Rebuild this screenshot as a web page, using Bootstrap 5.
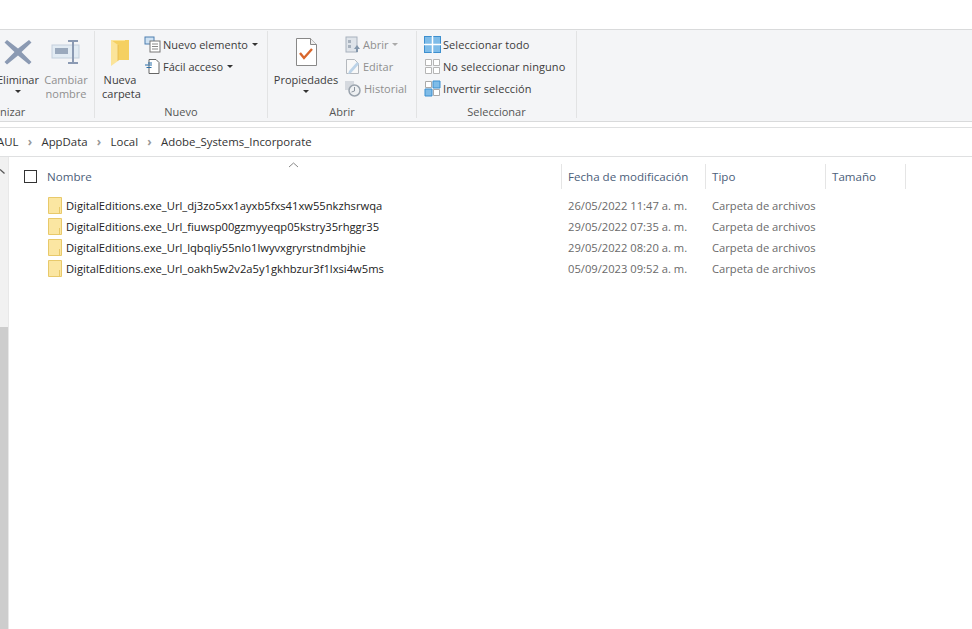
<!DOCTYPE html>
<html lang="es">
<head>
<meta charset="utf-8">
<link href="https://cdn.jsdelivr.net/npm/bootstrap@5.3.0/dist/css/bootstrap.min.css" rel="stylesheet">
<style>
html,body{margin:0;height:100%;overflow:hidden;background:#fff}
body{width:972px;height:629px;font-family:"Open Sans","Noto Sans",sans-serif;font-size:11px;line-height:15px;color:#3c3c3c}
.topgap{height:29px;background:#fff}
.ribbon{height:93px;background:#f4f5f7;border-top:1.500px solid #d9dadb;border-bottom:1.500px solid #d9dadb;padding-top:1px}
.rgroup{height:87px;border-right:1px solid #e2e3e4;flex:none;position:relative;padding-top:6px}
.g1{width:95px}.g2{width:173px}.g3{width:149px}.g4{width:160px}
.glabel{position:absolute;left:0;right:0;bottom:-1px;text-align:center;color:#555;height:15px}
.big{text-align:center;flex:none;line-height:14px}
.big svg{display:block;margin:0 auto 6px}
.dim{color:#8f8f8f}
.caret{display:inline-block;width:0;height:0;border-left:3px solid transparent;border-right:3px solid transparent;border-top:3px solid #333;vertical-align:2px;margin-left:2px}
.caret.off{border-top-color:#aaa}
.caret-solo{display:block;margin:3px auto 0;width:0;height:0;border-left:3px solid transparent;border-right:3px solid transparent;border-top:3px solid #333}
.smalls{display:flex;flex-direction:column;gap:0;margin-top:-4px}
.sm-row{display:flex;align-items:center;height:22px;gap:2px;white-space:nowrap}
.sm-row svg{flex:none}
.wide{letter-spacing:.08px}
.addr{height:30px;margin-top:5px;background:#fff;border-top:1.500px solid #dfe0e1;border-bottom:1.500px solid #dfe0e1;color:#333;font-size:11.400px;white-space:nowrap;padding-bottom:2px}
.addr .seg{margin-left:-3px}
.chev{color:#999;font-size:12px;font-weight:700;width:23px;text-align:center;flex:none}
.mainarea{height:473px}
.sbar{width:9px;flex:none;background:#f1f1f1;border-right:1px solid #e8e8e8;position:relative}
.thumb{position:absolute;left:0;right:0;top:170px;bottom:0;background:#cdcdcd}
.sarrow{position:absolute;left:0;top:12px}
.listing{flex:1;min-width:0;position:relative}
.hdr{height:38px;display:flex;align-items:flex-start;color:#4c607a;font-size:11.600px;padding-top:7px;line-height:25px}
.hcell{height:25px;border-right:1px solid #e5e5e5;padding-left:6px;flex:none}
.hname{width:553px;padding-left:0;display:flex;align-items:center}
.cbox{width:13px;height:13px;border:1px solid #333;margin:0 10px 0 15px;flex:none;background:#fff}
.hdate{width:144px}.htype{width:120px}.hsize{width:80px}
.sortmark{position:absolute;left:279px;top:5px}
.frow{height:21px;display:flex;align-items:center;font-size:11.200px;line-height:21px;white-space:nowrap}
.fname{width:553px;flex:none;display:flex;align-items:center;padding-left:39px;color:#222}
.fname svg{flex:none;margin-right:4px}
.fdate{width:144px;flex:none;padding-left:6px;color:#6a6a6a}
.ftype{flex:none;padding-left:6px;color:#6a6a6a}
</style>
</head>
<body>
<div class="topgap"></div>
<div class="ribbon d-flex">
  <div class="rgroup g1 d-flex">
    <div class="big" style="margin-left:-9px;width:54px">
      <svg width="30" height="30" viewBox="0 0 30 30"><path d="M4 3 L15 11.500 L26 3 L28.500 5.500 L18.500 15 L28.500 25 L26 27.500 L15 18.500 L4 27.500 L1.500 25 L11.500 15 L1.500 5.500Z" fill="#8b9ab3"/></svg>
      <div>Eliminar</div><span class="caret-solo"></span>
    </div>
    <div class="big dim" style="width:46px;margin-left:-2px">
      <svg width="30" height="30" viewBox="0 0 30 30"><rect x="1" y="8" width="27" height="13" fill="#e2ebf3" stroke="#c3d0dd"/><rect x="4" y="11" width="13" height="6" fill="#9aa9bd"/><path d="M17 4h10M17 26h10M22 4v22" stroke="#8b9ab3" stroke-width="2" fill="none"/></svg>
      <div>Cambiar<br>nombre</div>
    </div>
    <div class="glabel" style="text-align:left">nizar</div>
  </div>
  <div class="rgroup g2 d-flex">
    <div class="big" style="margin-left:7px;width:36px">
      <svg width="20" height="30" viewBox="0 0 20 30"><path d="M1 3h18v20H8z" fill="#f5d061"/><path d="M1 3L8 8V24L1 29z" fill="#fbe49a"/><path d="M1 3h14v1H1z" fill="#fbe49a"/><path d="M8 8V24" stroke="#e6b84a" stroke-width=".8"/></svg>
      <div>Nueva<br>carpeta</div>
    </div>
    <div class="smalls" style="margin-left:6px">
      <div class="sm-row"><svg width="17" height="17" viewBox="0 0 17 17"><rect x="1" y="1" width="9" height="7" fill="#cfe2f3" stroke="#4d7fb0"/><rect x="6" y="5" width="10" height="11" fill="#fff" stroke="#777"/><path d="M8 8h6M8 10.500h6M8 13h6" stroke="#888"/></svg><span>Nuevo elemento</span><span class="caret"></span></div>
      <div class="sm-row"><svg width="17" height="17" viewBox="0 0 17 17"><path d="M5 1.500h7l3 3v11H5z" fill="#fff" stroke="#666"/><path d="M1 7h7M2.500 9.500h5M4 5h4" stroke="#2a6ea8" stroke-width="1.200"/></svg><span>Fácil acceso</span><span class="caret"></span></div>
    </div>
    <div class="glabel">Nuevo</div>
  </div>
  <div class="rgroup g3 d-flex">
    <div class="big" style="margin-left:5px;width:66px">
      <svg width="24" height="30" viewBox="0 0 24 30"><path d="M2.500 1.500h14l6 6v21h-20z" fill="#fff" stroke="#888"/><path d="M16.500 1.500v6h6" fill="#eee" stroke="#888"/><path d="M6 16l4 5 8-9" fill="none" stroke="#d9662b" stroke-width="2.400"/></svg>
      <div>Propiedades</div><span class="caret-solo"></span>
    </div>
    <div class="smalls dim" style="margin-left:5px">
      <div class="sm-row"><svg width="17" height="17" viewBox="0 0 17 17"><rect x="2" y="1" width="11" height="15" fill="#dfe4ea" stroke="#a8b2be"/><path d="M4 4h3v3H4zM4 9h3v3H4z" fill="#a8b2be"/><path d="M13 9l3 4h-2v3h-2v-3h-2z" fill="#8396ab"/></svg><span>Abrir</span><span class="caret off"></span></div>
      <div class="sm-row"><svg width="17" height="17" viewBox="0 0 17 17"><path d="M2.500 1.500h8l4 4v10h-12z" fill="#f8f8f8" stroke="#b5b9be"/><path d="M5 13l8-9 2 2-8 9-3 1z" fill="#bcd3e8"/></svg><span>Editar</span></div>
      <div class="sm-row"><svg width="18" height="17" viewBox="0 0 18 17"><rect x="1" y="1" width="9" height="9" fill="#d5d9df"/><circle cx="10.500" cy="10.500" r="5.500" fill="#eef0f2" stroke="#9aa3ad" stroke-width="1.500"/><path d="M10.500 7v4l-3 1" stroke="#8a939e" fill="none"/></svg><span>Historial</span></div>
    </div>
    <div class="glabel">Abrir</div>
  </div>
  <div class="rgroup g4">
    <div class="smalls wide" style="margin-left:7px">
      <div class="sm-row"><svg width="17" height="17" viewBox="0 0 17 17"><rect x="0.500" y="0.500" width="16" height="16" fill="#7fbce8" stroke="#3d8fcf"/><path d="M8.500 0v17M0 8.500h17" stroke="#fff" stroke-width="1.500"/></svg><span>Seleccionar todo</span></div>
      <div class="sm-row"><svg width="17" height="17" viewBox="0 0 17 17"><path d="M1.500 1.500h6v6h-6zM9.500 1.500h6v6h-6zM1.500 9.500h6v6h-6zM9.500 9.500h6v6h-6z" fill="#fff" stroke="#b5b5b5"/></svg><span>No seleccionar ninguno</span></div>
      <div class="sm-row"><svg width="17" height="17" viewBox="0 0 17 17"><path d="M1.500 1.500h6v6h-6zM9.500 9.500h6v6h-6z" fill="#fff" stroke="#aaa"/><path d="M9 1h7v7H9zM1 9h7v7H1z" fill="#7fbce8" stroke="#3d8fcf"/></svg><span>Invertir selección</span></div>
    </div>
    <div class="glabel">Seleccionar</div>
  </div>
</div>
<div class="addr d-flex align-items-center">
  <span class="seg">AUL</span><span class="chev">&#8250;</span><span>AppData</span><span class="chev">&#8250;</span><span>Local</span><span class="chev">&#8250;</span><span>Adobe_Systems_Incorporate</span>
</div>
<div class="mainarea d-flex">
  <div class="sbar"><div class="thumb"></div>
    <svg class="sarrow" width="5" height="5" viewBox="0 0 5 5"><path d="M0 0.500 L4.500 4.500" stroke="#555" stroke-width="1.300" fill="none"/></svg>
  </div>
  <div class="listing">
    <svg class="sortmark" width="11" height="6" viewBox="0 0 11 6"><path d="M1 5 L5.500 1 L10 5" stroke="#888" fill="none"/></svg>
    <div class="hdr">
      <div class="hcell hname"><span class="cbox"></span>Nombre</div>
      <div class="hcell hdate">Fecha de modificación</div>
      <div class="hcell htype">Tipo</div>
      <div class="hcell hsize">Tamaño</div>
    </div>
    <div class="frow"><div class="fname"><svg width="14" height="17" viewBox="0 0 14 17"><path d="M0.500 0.500h13v16h-13z" fill="#fbe6a2" stroke="#e8c96a"/><path d="M11.500 16v-6" stroke="#e8c96a"/></svg>DigitalEditions.exe_Url_dj3zo5xx1ayxb5fxs41xw55nkzhsrwqa</div><div class="fdate">26/05/2022 11:47 a. m.</div><div class="ftype">Carpeta de archivos</div></div>
    <div class="frow"><div class="fname"><svg width="14" height="17" viewBox="0 0 14 17"><path d="M0.500 0.500h13v16h-13z" fill="#fbe6a2" stroke="#e8c96a"/><path d="M11.500 16v-6" stroke="#e8c96a"/></svg>DigitalEditions.exe_Url_fiuwsp00gzmyyeqp05kstry35rhggr35</div><div class="fdate">29/05/2022 07:35 a. m.</div><div class="ftype">Carpeta de archivos</div></div>
    <div class="frow"><div class="fname"><svg width="14" height="17" viewBox="0 0 14 17"><path d="M0.500 0.500h13v16h-13z" fill="#fbe6a2" stroke="#e8c96a"/><path d="M11.500 16v-6" stroke="#e8c96a"/></svg>DigitalEditions.exe_Url_lqbqliy55nlo1lwyvxgryrstndmbjhie</div><div class="fdate">29/05/2022 08:20 a. m.</div><div class="ftype">Carpeta de archivos</div></div>
    <div class="frow"><div class="fname"><svg width="14" height="17" viewBox="0 0 14 17"><path d="M0.500 0.500h13v16h-13z" fill="#fbe6a2" stroke="#e8c96a"/><path d="M11.500 16v-6" stroke="#e8c96a"/></svg>DigitalEditions.exe_Url_oakh5w2v2a5y1gkhbzur3f1lxsi4w5ms</div><div class="fdate">05/09/2023 09:52 a. m.</div><div class="ftype">Carpeta de archivos</div></div>
  </div>
</div>
<script src="https://cdn.jsdelivr.net/npm/bootstrap@5.3.0/dist/js/bootstrap.bundle.min.js"></script>
</body>
</html>
